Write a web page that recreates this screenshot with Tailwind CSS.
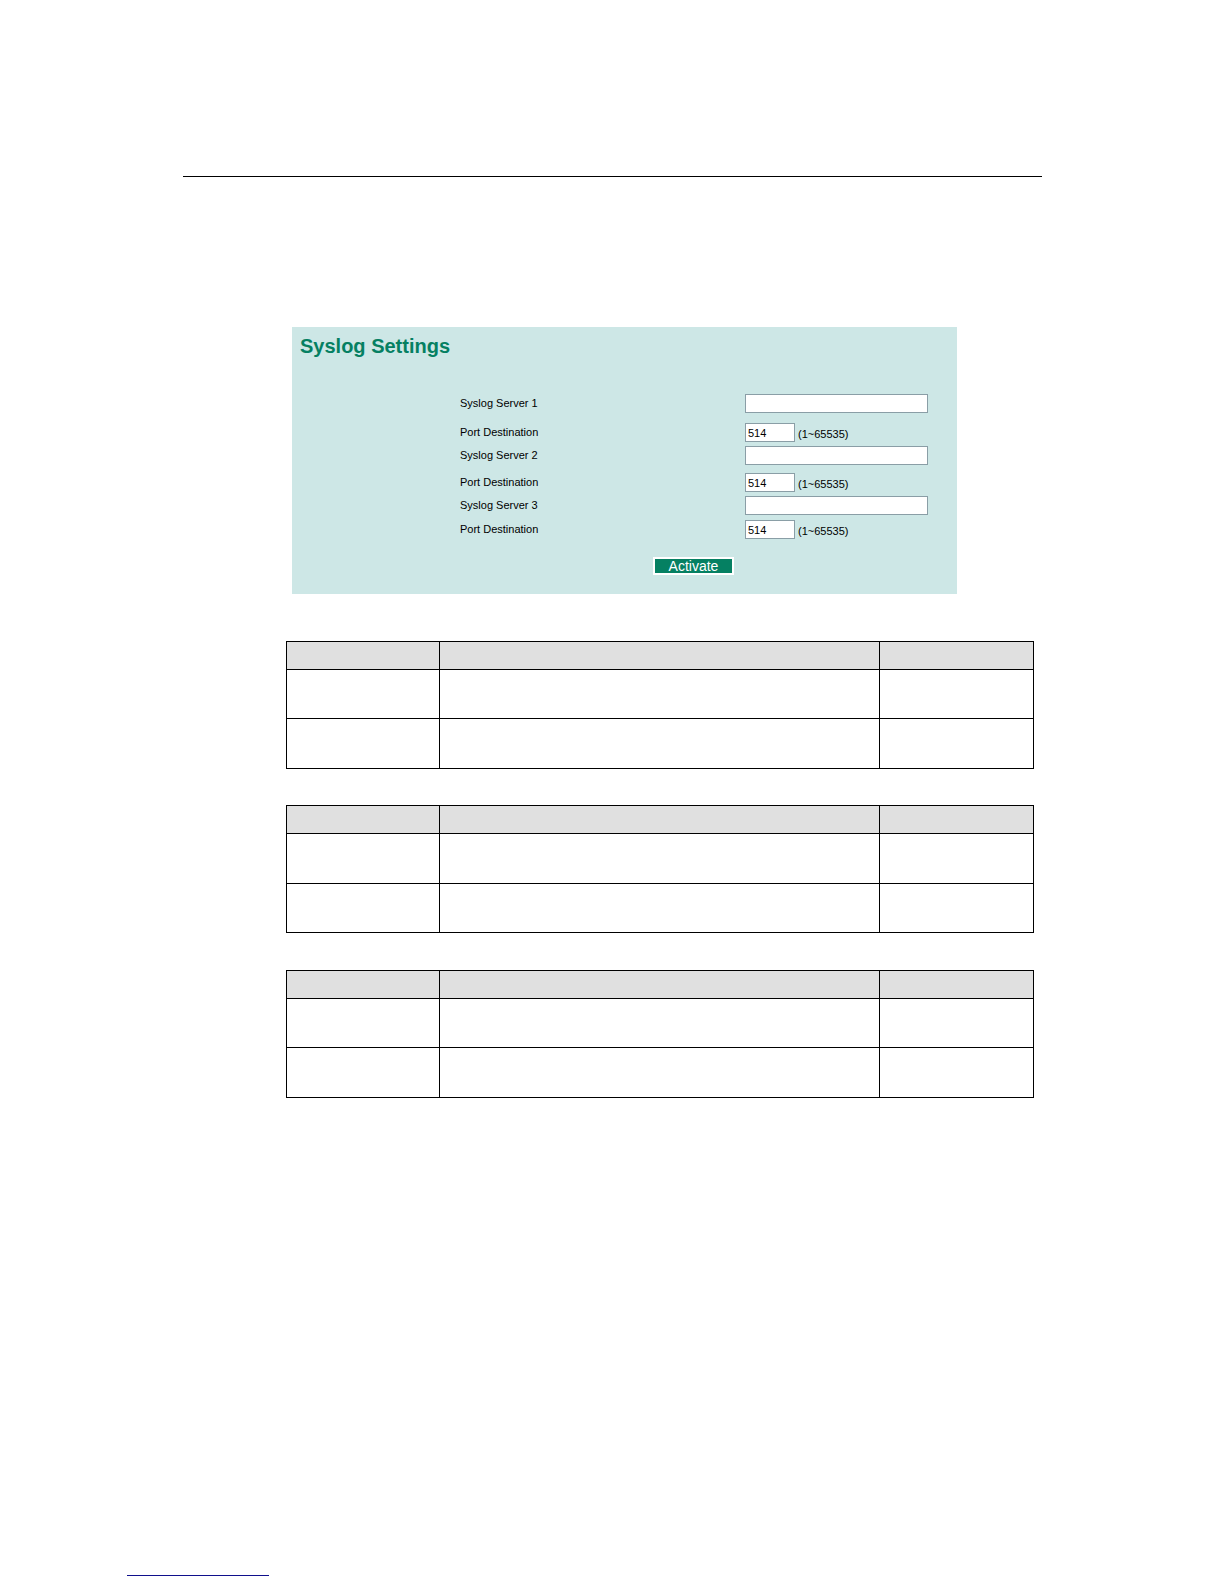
<!DOCTYPE html>
<html lang="en">
<head>
    <meta charset="UTF-8">
    <meta name="viewport" content="width=device-width, initial-scale=1.0">
    <title>Syslog Settings</title>
    <script src="https://cdn.jsdelivr.net/npm/@tailwindcss/browser@4"></script>
</head>
<body class="bg-white text-black font-['Liberation_Sans',Arial,sans-serif]">
    <div class="min-h-screen flex flex-col">
        <main class="flex-1 pt-44 pl-[183px] pr-[182px]">
            <hr class="border-t border-black">

            <div class="pl-[103px] pr-2 pt-[150px]">
                <!-- Settings form -->
                <form class="ml-[6px] max-w-[665px] bg-[#cde7e6] pt-[6px] pb-[19px] text-[11px]">
                    <h1 class="pl-2 text-[20px] leading-[26px] font-bold text-[#058062]">Syslog Settings</h1>

                    <div class="mt-[35px] pl-[168px]">
                        <div class="flex items-center mb-[10px]">
                            <label for="server1" class="w-[285px]">Syslog Server 1</label>
                            <input type="text" id="server1" class="w-[183px] h-[19px] px-[2px] bg-white border border-[#8a9ea6]">
                        </div>
                        <div class="flex items-center mb-1">
                            <label for="port1" class="w-[285px]">Port Destination</label>
                            <input type="text" id="port1" value="514" class="w-[50px] h-[19px] px-[2px] bg-white border border-[#8a9ea6]">
                            <span class="pl-[3px] pt-[3px] leading-4">(1~65535)</span>
                        </div>
                        <div class="flex items-center mb-2">
                            <label for="server2" class="w-[285px]">Syslog Server 2</label>
                            <input type="text" id="server2" class="w-[183px] h-[19px] px-[2px] bg-white border border-[#8a9ea6]">
                        </div>
                        <div class="flex items-center mb-1">
                            <label for="port2" class="w-[285px]">Port Destination</label>
                            <input type="text" id="port2" value="514" class="w-[50px] h-[19px] px-[2px] bg-white border border-[#8a9ea6]">
                            <span class="pl-[3px] pt-[3px] leading-4">(1~65535)</span>
                        </div>
                        <div class="flex items-center mb-[5px]">
                            <label for="server3" class="w-[285px]">Syslog Server 3</label>
                            <input type="text" id="server3" class="w-[183px] h-[19px] px-[2px] bg-white border border-[#8a9ea6]">
                        </div>
                        <div class="flex items-center">
                            <label for="port3" class="w-[285px]">Port Destination</label>
                            <input type="text" id="port3" value="514" class="w-[50px] h-[19px] px-[2px] bg-white border border-[#8a9ea6]">
                            <span class="pl-[3px] pt-[3px] leading-4">(1~65535)</span>
                        </div>
                    </div>

                    <button type="button" class="block ml-[361px] mt-[18px] w-[81px] h-[18px] border-2 border-white bg-[#058062] text-white text-[14px] leading-[14px]">Activate</button>
                </form>

                <!-- Setting / description / default tables -->
                <div class="mt-[47px]">
                    <table class="w-full table-fixed border-collapse">
                        <colgroup><col class="w-[153px]"><col><col class="w-[154px]"></colgroup>
                        <thead>
                            <tr class="h-7 bg-[#e0e0e0]"><th class="border border-black"></th><th class="border border-black"></th><th class="border border-black"></th></tr>
                        </thead>
                        <tbody>
                            <tr class="h-[49px]"><td class="border border-black"></td><td class="border border-black"></td><td class="border border-black"></td></tr>
                            <tr class="h-[50px]"><td class="border border-black"></td><td class="border border-black"></td><td class="border border-black"></td></tr>
                        </tbody>
                    </table>

                    <table class="mt-9 w-full table-fixed border-collapse">
                        <colgroup><col class="w-[153px]"><col><col class="w-[154px]"></colgroup>
                        <thead>
                            <tr class="h-7 bg-[#e0e0e0]"><th class="border border-black"></th><th class="border border-black"></th><th class="border border-black"></th></tr>
                        </thead>
                        <tbody>
                            <tr class="h-[50px]"><td class="border border-black"></td><td class="border border-black"></td><td class="border border-black"></td></tr>
                            <tr class="h-[49px]"><td class="border border-black"></td><td class="border border-black"></td><td class="border border-black"></td></tr>
                        </tbody>
                    </table>

                    <table class="mt-[37px] w-full table-fixed border-collapse">
                        <colgroup><col class="w-[153px]"><col><col class="w-[154px]"></colgroup>
                        <thead>
                            <tr class="h-7 bg-[#e0e0e0]"><th class="border border-black"></th><th class="border border-black"></th><th class="border border-black"></th></tr>
                        </thead>
                        <tbody>
                            <tr class="h-[49px]"><td class="border border-black"></td><td class="border border-black"></td><td class="border border-black"></td></tr>
                            <tr class="h-[50px]"><td class="border border-black"></td><td class="border border-black"></td><td class="border border-black"></td></tr>
                        </tbody>
                    </table>
                </div>
            </div>
        </main>

        <footer class="pl-[127px] pb-2">
            <hr class="w-[142px] border-t border-[#10108c]">
        </footer>
    </div>
</body>
</html>
